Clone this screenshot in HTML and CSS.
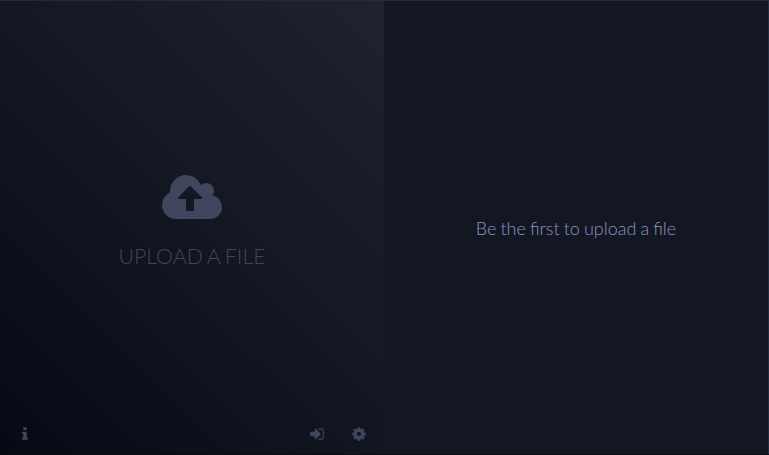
FILE: index.html
```html
<!DOCTYPE html>
<html lang="en">
<head>
<meta charset="utf-8">
<title>Upload</title>
<link rel="stylesheet" href="styles.css">
</head>
<body>
<main class="app">
  <section class="upload">
    <div class="drop">
      <svg class="cloud" viewBox="0 -1536 1920 1792" aria-hidden="true"><path transform="scale(1 -1)" d="M1280 672q0 14 -9 23l-352 352q-9 9 -23 9t-23 -9l-351 -351q-10 -12 -10 -24q0 -14 9 -23t23 -9h224v-352q0 -13 9.5 -22.5t22.5 -9.5h192q13 0 22.5 9.5t9.5 22.5v352h224q13 0 22.5 9.5t9.5 22.5zM1920 384q0 -159 -112.5 -271.5t-271.5 -112.5h-1088q-185 0 -316.5 131.5t-131.5 316.5q0 130 70 240t188 165q-2 30 -2 43q0 212 150 362t362 150q156 0 285.5 -87t188.5 -231q71 62 166 62q106 0 181 -75t75 -181q0 -76 -41 -138q130 -31 213.5 -135.5t83.5 -238.5z"/></svg>
      <div class="label">UPLOAD A FILE</div>
    </div>
    <nav class="tools">
      <svg class="icon info" viewBox="0 -1536 640 1792" aria-hidden="true"><path transform="scale(1 -1)" d="M640 192v-128q0 -26 -19 -45t-45 -19h-512q-26 0 -45 19t-19 45v128q0 26 19 45t45 19h64v384h-64q-26 0 -45 19t-19 45v128q0 26 19 45t45 19h384q26 0 45 -19t19 -45v-576h64q26 0 45 -19t19 -45zM512 1344v-192q0 -26 -19 -45t-45 -19h-256q-26 0 -45 19t-19 45v192q0 26 19 45t45 19h256q26 0 45 -19t19 -45z"/></svg>
      <svg class="icon" viewBox="0 -1536 1536 1792" aria-hidden="true"><path transform="scale(1 -1)" d="M1184 640q0 -26 -19 -45l-544 -544q-19 -19 -45 -19t-45 19t-19 45v288h-448q-26 0 -45 19t-19 45v384q0 26 19 45t45 19h448v288q0 26 19 45t45 19t45 -19l544 -544q19 -19 19 -45zM1536 992v-704q0 -119 -84.5 -203.5t-203.5 -84.5h-320q-13 0 -22.5 9.5t-9.5 22.5q0 4 -1 20t-.5 26.5t3 23.5t10 19.5t20.5 6.5h320q66 0 113 47t47 113v704q0 66 -47 113t-113 47h-312l-11.5 1l-11.5 3t-8 5.5t-7 9t-2 13.5q0 4 -1 20t-.5 26.5t3 23.5t10 19.5t20.5 6.5h320q119 0 203.5 -84.5t84.5 -203.5z"/></svg>
      <svg class="icon" viewBox="0 -1536 1536 1792" aria-hidden="true"><path transform="scale(1 -1)" d="M1024 640q0 106 -75 181t-181 75t-181 -75t-75 -181t75 -181t181 -75t181 75t75 181zM1536 749v-222q0 -12 -8 -23t-20 -13l-185 -28q-19 -54 -39 -91q35 -50 107 -138q10 -12 10 -25t-9 -23q-27 -37 -99 -108t-94 -71q-12 0 -26 9l-138 108q-44 -23 -91 -38q-16 -136 -29 -186q-7 -28 -36 -28h-222q-14 0 -24.5 8.5t-11.5 21.5l-28 184q-49 16 -90 37l-141 -107q-10 -9 -25 -9q-14 0 -25 11q-126 114 -165 168q-7 10 -7 23q0 12 8 23q15 21 51 66.5t54 70.5q-27 50 -41 99l-183 27q-13 2 -21 12.5t-8 23.5v222q0 12 8 23t19 13l186 28q14 46 39 92q-40 57 -107 138q-10 12 -10 24q0 10 9 23q26 36 98.5 107.5t94.5 71.5q13 0 26 -10l138 -107q44 23 91 38q16 136 29 186q7 28 36 28h222q14 0 24.5 -8.5t11.5 -21.5l28 -184q49 -16 90 -37l142 107q9 9 24 9q13 0 25 -10q129 -119 165 -170q7 -8 7 -22q0 -12 -8 -23q-15 -21 -51 -66.5t-54 -70.5q26 -50 41 -98l183 -28q13 -2 21 -12.5t8 -23.5z"/></svg>
    </nav>
  </section>
  <section class="files">
    <p class="empty">Be the first to upload a file</p>
  </section>
</main>
</body>
</html>
```

FILE: styles.css
```css
* { box-sizing: border-box; }
body {
  margin: 0;
  background: #131721;
  font-family: Lato, "Open Sans", sans-serif;
  font-weight: 300;
}
.app {
  display: grid;
  grid-template-columns: 384px 1fr;
  height: 100vh;
  border-top: 1px solid #202b42;
  border-bottom: 1px solid #080c14;
}
.upload {
  display: flex;
  flex-direction: column;
  background: linear-gradient(45deg, #060a14, #1e232e);
  color: #40465d;
}
.drop {
  flex: 1;
  display: flex;
  flex-direction: column;
  align-items: center;
  padding-top: 170px;
}
.cloud { width: 60px; height: 56px; fill: currentColor; }
.label {
  margin-top: 16px;
  font-size: 21.33px;
  line-height: 26px;
  word-spacing: -1.1px;
  white-space: nowrap;
}
.tools {
  display: flex;
  gap: 28px;
  padding: 0 18px 12px 22px;
}
.icon { width: 14px; height: 16px; fill: currentColor; }
.info { width: 6px; margin-right: auto; }
.files {
  display: flex;
  align-items: center;
  justify-content: center;
  border-right: 1px solid #202b42;
}
.empty {
  margin: 0;
  color: #8c95c8;
  font-size: 18px;
  line-height: 24px;
  word-spacing: -0.85px;
}
```
